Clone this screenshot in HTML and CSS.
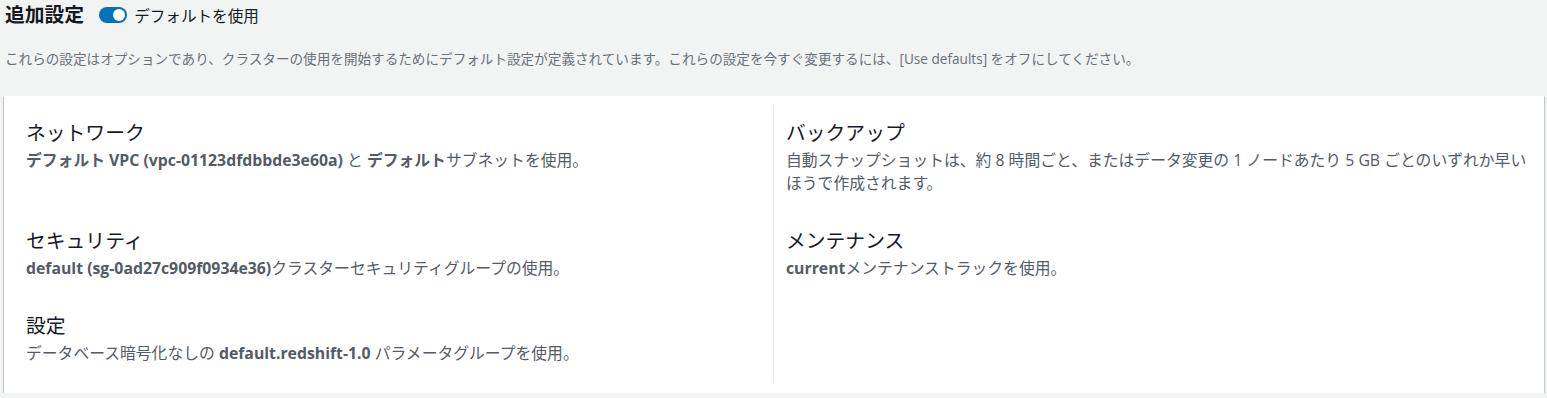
FILE: index.html
```html
<!DOCTYPE html>
<html>
	<head>
		<meta charset="utf-8" />
		<title>追加設定</title>
		<link rel="stylesheet" href="styles.css">
	</head>
	<body>
		<div class="header">
			<h2 class="title">追加設定</h2>
			<div class="toggle"><span class="knob"></span></div>
			<span class="toggle-label">デフォルトを使用</span>
		</div>
		<p class="desc">これらの設定はオプションであり、クラスターの使用を開始するためにデフォルト設定が定義されています。これらの設定を今すぐ変更するには、[Use defaults] をオフにしてください。</p>

		<div class="card">
			<div class="grid">
				<div class="cell">
					<h3>ネットワーク</h3>
					<p><b>デフォルト VPC (vpc-01123dfdbbde3e60a)</b> と <b>デフォルト</b>サブネットを使用。</p>
				</div>
				<div class="cell right">
					<h3>バックアップ</h3>
					<p>自動スナップショットは、約 8 時間ごと、またはデータ変更の 1 ノードあたり 5 GB ごとのいずれか早いほうで作成されます。</p>
				</div>
				<div class="cell">
					<h3>セキュリティ</h3>
					<p><b>default (sg-0ad27c909f0934e36)</b>クラスターセキュリティグループの使用。</p>
				</div>
				<div class="cell right">
					<h3>メンテナンス</h3>
					<p><b>current</b>メンテナンストラックを使用。</p>
				</div>
				<div class="cell last">
					<h3>設定</h3>
					<p>データベース暗号化なしの <b>default.redshift-1.0</b> パラメータグループを使用。</p>
				</div>
				<div class="cell right last"></div>
			</div>
		</div>
	</body>
</html>
```

FILE: styles.css
```css
body{
	margin: 0;
	padding: 0 3px 0 4px;
	background-color: #f2f3f3;
	font-family: "Open Sans", "Noto Sans CJK JP", sans-serif;
	color: #16191f;
}

.header{
	display: flex;
	align-items: center;
	height: 30px;
}

.title{
	margin: 0 0 0 1px;
	font-size: 19.8px;
	font-weight: bold;
	line-height: 30px;
}

.toggle{
	width: 28px;
	height: 16px;
	margin-left: 15px;
	border-radius: 8px;
	background-color: #0073bb;
	position: relative;
}

.toggle .knob{
	width: 12px;
	height: 12px;
	border-radius: 50%;
	background-color: #fff;
	position: absolute;
	top: 2px;
	right: 2px;
}

.toggle-label{
	margin-left: 7px;
	font-size: 15.6px;
}

.desc{
	margin: 19px 0 0 1px;
	font-size: 13.6px;
	line-height: 20px;
	color: #687078;
}

.card{
	margin-top: 27px;
	background-color: #fff;
	padding: 9px 0 10px;
	box-shadow: 0 1px 1px 0 rgba(0,28,36,.3), 1px 1px 1px 0 rgba(0,28,36,.15), -1px 1px 1px 0 rgba(0,28,36,.15);
}

.grid{
	display: grid;
	grid-template-columns: 769px 1fr;
}

.cell{
	padding: 17px 16px 18px 22px;
}

.cell.right{
	border-left: 1px solid #eaeded;
	padding-left: 12px;
}

.cell.last{
	padding-bottom: 18px;
}

.cell h3{
	margin: 0;
	font-size: 19.8px;
	font-weight: normal;
	line-height: 22px;
}

.cell p{
	margin: 5px 0 0;
	font-size: 15.8px;
	line-height: 23px;
	color: #545b64;
}

.cell p b{
	font-weight: bold;
}
```
